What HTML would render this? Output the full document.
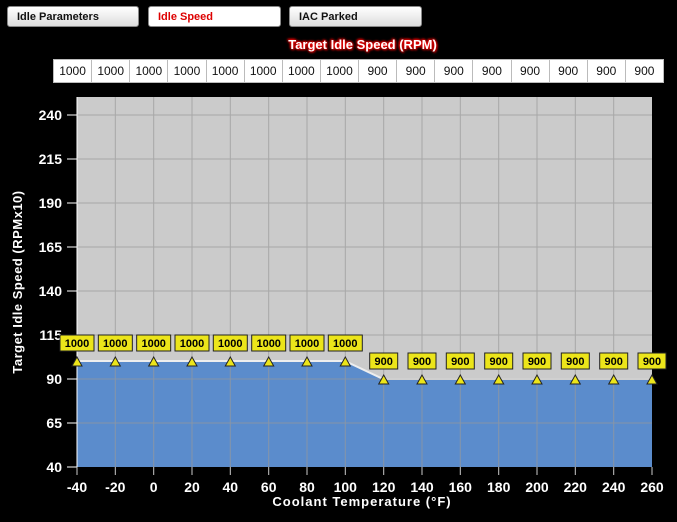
<!DOCTYPE html>
<html><head><style>
body{margin:0;width:677px;height:522px;background:#000;overflow:hidden;position:relative;font-family:"Liberation Sans",Arial,sans-serif}
.btn{position:absolute;top:6px;height:21px;border:1px solid #888;border-radius:3px;background:linear-gradient(#fff,#ddd);font-weight:bold;font-size:11px;line-height:21px;padding-left:9px;box-sizing:border-box;color:#111}
.title{position:absolute;top:37px;left:0;width:725px;text-align:center;color:#fff;font-weight:bold;font-size:13px;text-shadow:0 0 2px #e00,0 0 3px #e00,1px 1px 2px #c00,-1px -1px 2px #c00}
table{position:absolute;left:53px;top:59px;width:611px;height:24px;border-collapse:collapse;background:#fff;table-layout:fixed}
td{border:1px solid #bbb;font-size:12px;text-align:center;color:#111;padding:0;font-family:"Liberation Sans Narrow","Liberation Sans",sans-serif}
</style></head><body>
<div class="btn" style="left:7px;width:132px">Idle Parameters</div>
<div class="btn" style="left:148px;width:133px;color:#d00;background:#fff">Idle Speed</div>
<div class="btn" style="left:289px;width:133px">IAC Parked</div>
<div class="title">Target Idle Speed (RPM)</div>
<table><tr><td>1000</td><td>1000</td><td>1000</td><td>1000</td><td>1000</td><td>1000</td><td>1000</td><td>1000</td><td>900</td><td>900</td><td>900</td><td>900</td><td>900</td><td>900</td><td>900</td><td>900</td></tr></table>
<svg width="677" height="522" style="position:absolute;left:0;top:0" font-family="Liberation Sans,Arial,sans-serif" font-weight="bold">
<rect x="77" y="97" width="575" height="370" fill="#cbcbcb"/>
<polygon points="77,361 345,361 383,379 652,379 652,467 77,467" fill="#5b8ccc"/>
<polyline points="77,361 345,361 383,379 652,379" fill="none" stroke="#eee" stroke-width="2"/>
<g stroke="#999" stroke-width="1" opacity="0.7">
<line x1="115.3" y1="97" x2="115.3" y2="467"/><line x1="153.7" y1="97" x2="153.7" y2="467"/><line x1="192" y1="97" x2="192" y2="467"/><line x1="230.3" y1="97" x2="230.3" y2="467"/><line x1="268.7" y1="97" x2="268.7" y2="467"/><line x1="307" y1="97" x2="307" y2="467"/><line x1="345.3" y1="97" x2="345.3" y2="467"/><line x1="383.7" y1="97" x2="383.7" y2="467"/><line x1="422" y1="97" x2="422" y2="467"/><line x1="460.3" y1="97" x2="460.3" y2="467"/><line x1="498.7" y1="97" x2="498.7" y2="467"/><line x1="537" y1="97" x2="537" y2="467"/><line x1="575.3" y1="97" x2="575.3" y2="467"/><line x1="613.7" y1="97" x2="613.7" y2="467"/>
<line x1="77" y1="115" x2="652" y2="115"/><line x1="77" y1="159" x2="652" y2="159"/><line x1="77" y1="203" x2="652" y2="203"/><line x1="77" y1="247" x2="652" y2="247"/><line x1="77" y1="291" x2="652" y2="291"/><line x1="77" y1="335" x2="652" y2="335"/><line x1="77" y1="379" x2="652" y2="379"/><line x1="77" y1="423" x2="652" y2="423"/>
</g>
<g stroke="#fff" stroke-width="1">
<line x1="77" y1="97" x2="77" y2="467"/>
<line x1="67" y1="115" x2="77" y2="115"/><line x1="67" y1="159" x2="77" y2="159"/><line x1="67" y1="203" x2="77" y2="203"/><line x1="67" y1="247" x2="77" y2="247"/><line x1="67" y1="291" x2="77" y2="291"/><line x1="67" y1="335" x2="77" y2="335"/><line x1="67" y1="379" x2="77" y2="379"/><line x1="67" y1="423" x2="77" y2="423"/><line x1="67" y1="467" x2="77" y2="467"/>
</g>
<g fill="#fff" font-size="14" text-anchor="end">
<text x="62" y="120">240</text><text x="62" y="164">215</text><text x="62" y="208">190</text><text x="62" y="252">165</text><text x="62" y="296">140</text><text x="62" y="340">115</text><text x="62" y="384">90</text><text x="62" y="428">65</text><text x="62" y="472">40</text>
</g>
<g stroke="#ccc"><line x1="77" y1="467" x2="77" y2="475"/><line x1="115.3" y1="467" x2="115.3" y2="475"/><line x1="153.7" y1="467" x2="153.7" y2="475"/><line x1="192" y1="467" x2="192" y2="475"/><line x1="230.3" y1="467" x2="230.3" y2="475"/><line x1="268.7" y1="467" x2="268.7" y2="475"/><line x1="307" y1="467" x2="307" y2="475"/><line x1="345.3" y1="467" x2="345.3" y2="475"/><line x1="383.7" y1="467" x2="383.7" y2="475"/><line x1="422" y1="467" x2="422" y2="475"/><line x1="460.3" y1="467" x2="460.3" y2="475"/><line x1="498.7" y1="467" x2="498.7" y2="475"/><line x1="537" y1="467" x2="537" y2="475"/><line x1="575.3" y1="467" x2="575.3" y2="475"/><line x1="613.7" y1="467" x2="613.7" y2="475"/><line x1="652" y1="467" x2="652" y2="475"/></g>
<g fill="#fff" font-size="14" text-anchor="middle">
<text x="77" y="492">-40</text><text x="115.3" y="492">-20</text><text x="153.7" y="492">0</text><text x="192" y="492">20</text><text x="230.3" y="492">40</text><text x="268.7" y="492">60</text><text x="307" y="492">80</text><text x="345.3" y="492">100</text><text x="383.7" y="492">120</text><text x="422" y="492">140</text><text x="460.3" y="492">160</text><text x="498.7" y="492">180</text><text x="537" y="492">200</text><text x="575.3" y="492">220</text><text x="613.7" y="492">240</text><text x="652" y="492">260</text>
<text x="362" y="506" font-size="13" letter-spacing="1">Coolant Temperature (°F)</text>
</g>
<text transform="translate(22,282) rotate(-90)" fill="#fff" font-size="13" text-anchor="middle" letter-spacing="0.5">Target Idle Speed (RPMx10)</text>
<g fill="#ece51a" stroke="#222" stroke-width="1">
<g><rect x="60" y="335" width="34" height="16"/><polygon points="77,357 72,366 82,366"/></g>
<g transform="translate(38.33,0)"><rect x="60" y="335" width="34" height="16"/><polygon points="77,357 72,366 82,366"/></g>
<g transform="translate(76.67,0)"><rect x="60" y="335" width="34" height="16"/><polygon points="77,357 72,366 82,366"/></g>
<g transform="translate(115,0)"><rect x="60" y="335" width="34" height="16"/><polygon points="77,357 72,366 82,366"/></g>
<g transform="translate(153.3,0)"><rect x="60" y="335" width="34" height="16"/><polygon points="77,357 72,366 82,366"/></g>
<g transform="translate(191.7,0)"><rect x="60" y="335" width="34" height="16"/><polygon points="77,357 72,366 82,366"/></g>
<g transform="translate(230,0)"><rect x="60" y="335" width="34" height="16"/><polygon points="77,357 72,366 82,366"/></g>
<g transform="translate(268.3,0)"><rect x="60" y="335" width="34" height="16"/><polygon points="77,357 72,366 82,366"/></g>
</g>
<g fill="#ece51a" stroke="#222" stroke-width="1">
<g transform="translate(306.7,18)"><rect x="63" y="335" width="28" height="16"/><polygon points="77,357 72,366 82,366"/></g>
<g transform="translate(345,18)"><rect x="63" y="335" width="28" height="16"/><polygon points="77,357 72,366 82,366"/></g>
<g transform="translate(383.3,18)"><rect x="63" y="335" width="28" height="16"/><polygon points="77,357 72,366 82,366"/></g>
<g transform="translate(421.7,18)"><rect x="63" y="335" width="28" height="16"/><polygon points="77,357 72,366 82,366"/></g>
<g transform="translate(460,18)"><rect x="63" y="335" width="28" height="16"/><polygon points="77,357 72,366 82,366"/></g>
<g transform="translate(498.3,18)"><rect x="63" y="335" width="28" height="16"/><polygon points="77,357 72,366 82,366"/></g>
<g transform="translate(536.7,18)"><rect x="63" y="335" width="28" height="16"/><polygon points="77,357 72,366 82,366"/></g>
<g transform="translate(575,18)"><rect x="63" y="335" width="28" height="16"/><polygon points="77,357 72,366 82,366"/></g>
</g>
<g fill="#000" font-size="11" text-anchor="middle">
<text x="77" y="347">1000</text><text x="115.3" y="347">1000</text><text x="153.7" y="347">1000</text><text x="192" y="347">1000</text><text x="230.3" y="347">1000</text><text x="268.7" y="347">1000</text><text x="307" y="347">1000</text><text x="345.3" y="347">1000</text>
<text x="383.7" y="365">900</text><text x="422" y="365">900</text><text x="460.3" y="365">900</text><text x="498.7" y="365">900</text><text x="537" y="365">900</text><text x="575.3" y="365">900</text><text x="613.7" y="365">900</text><text x="652" y="365">900</text>
</g>
</svg>
</body></html>
